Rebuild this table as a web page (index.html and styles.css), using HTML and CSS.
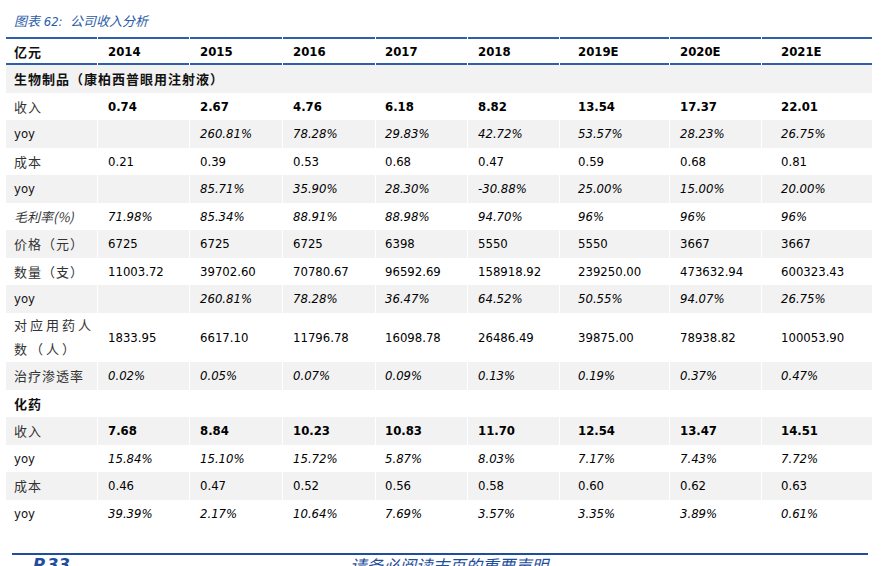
FILE: index.html
```html
<!DOCTYPE html>
<html lang="zh">
<head>
<meta charset="utf-8">
<title>公司收入分析</title>
<link rel="stylesheet" href="styles.css">
</head>
<body>
<div class="page">
  <div class="title">图表 62:&nbsp; 公司收入分析</div>
  <table class="data">
    <colgroup>
      <col class="c0"><col class="c1"><col class="c2"><col class="c3"><col class="c4"><col class="c5"><col class="c6"><col class="c7"><col class="c8">
    </colgroup>
    <thead>
      <tr><th class="lab">亿元</th><th>2014</th><th>2015</th><th>2016</th><th>2017</th><th>2018</th><th>2019E</th><th>2020E</th><th>2021E</th></tr>
    </thead>
    <tbody>
      <tr class="g"><td class="sec" colspan="9">生物制品（康柏西普眼用注射液）</td></tr>
      <tr><td class="lab">收入</td><td class="b">0.74</td><td class="b">2.67</td><td class="b">4.76</td><td class="b">6.18</td><td class="b">8.82</td><td class="b">13.54</td><td class="b">17.37</td><td class="b">22.01</td></tr>
      <tr class="g"><td class="en">yoy</td><td></td><td class="i">260.81%</td><td class="i">78.28%</td><td class="i">29.83%</td><td class="i">42.72%</td><td class="i">53.57%</td><td class="i">28.23%</td><td class="i">26.75%</td></tr>
      <tr><td class="lab">成本</td><td>0.21</td><td>0.39</td><td>0.53</td><td>0.68</td><td>0.47</td><td>0.59</td><td>0.68</td><td>0.81</td></tr>
      <tr class="g"><td class="en">yoy</td><td></td><td class="i">85.71%</td><td class="i">35.90%</td><td class="i">28.30%</td><td class="i">-30.88%</td><td class="i">25.00%</td><td class="i">15.00%</td><td class="i">20.00%</td></tr>
      <tr><td class="lab it">毛利率(%)</td><td class="i">71.98%</td><td class="i">85.34%</td><td class="i">88.91%</td><td class="i">88.98%</td><td class="i">94.70%</td><td class="i">96%</td><td class="i">96%</td><td class="i">96%</td></tr>
      <tr class="g"><td class="lab">价格（元）</td><td>6725</td><td>6725</td><td>6725</td><td>6398</td><td>5550</td><td>5550</td><td>3667</td><td>3667</td></tr>
      <tr><td class="lab">数量（支）</td><td>11003.72</td><td>39702.60</td><td>70780.67</td><td>96592.69</td><td>158918.92</td><td>239250.00</td><td>473632.94</td><td>600323.43</td></tr>
      <tr class="g"><td class="en">yoy</td><td></td><td class="i">260.81%</td><td class="i">78.28%</td><td class="i">36.47%</td><td class="i">64.52%</td><td class="i">50.55%</td><td class="i">94.07%</td><td class="i">26.75%</td></tr>
      <tr class="tall"><td class="lab two">对应用药人<br>数（人）</td><td>1833.95</td><td>6617.10</td><td>11796.78</td><td>16098.78</td><td>26486.49</td><td>39875.00</td><td>78938.82</td><td>100053.90</td></tr>
      <tr class="g"><td class="lab">治疗渗透率</td><td class="i">0.02%</td><td class="i">0.05%</td><td class="i">0.07%</td><td class="i">0.09%</td><td class="i">0.13%</td><td class="i">0.19%</td><td class="i">0.37%</td><td class="i">0.47%</td></tr>
      <tr><td class="sec" colspan="9">化药</td></tr>
      <tr class="g"><td class="lab">收入</td><td class="b">7.68</td><td class="b">8.84</td><td class="b">10.23</td><td class="b">10.83</td><td class="b">11.70</td><td class="b">12.54</td><td class="b">13.47</td><td class="b">14.51</td></tr>
      <tr><td class="en">yoy</td><td class="i">15.84%</td><td class="i">15.10%</td><td class="i">15.72%</td><td class="i">5.87%</td><td class="i">8.03%</td><td class="i">7.17%</td><td class="i">7.43%</td><td class="i">7.72%</td></tr>
      <tr class="g"><td class="lab">成本</td><td>0.46</td><td>0.47</td><td>0.52</td><td>0.56</td><td>0.58</td><td>0.60</td><td>0.62</td><td>0.63</td></tr>
      <tr><td class="en">yoy</td><td class="i">39.39%</td><td class="i">2.17%</td><td class="i">10.64%</td><td class="i">7.69%</td><td class="i">3.57%</td><td class="i">3.35%</td><td class="i">3.89%</td><td class="i">0.61%</td></tr>
    </tbody>
  </table>
  <div class="footer">
    <span class="pg">P.33</span>
    <span class="notice">请务必阅读末页的重要声明</span>
  </div>
</div>
</body>
</html>
```

FILE: styles.css
```css
html, body {
  margin: 0;
  padding: 0;
  background: #ffffff;
}

body {
  font-family: "DejaVu Sans Condensed", "DejaVu Sans", "Noto Sans CJK SC", sans-serif;
  font-size: 13px;
  color: #000000;
}

.page {
  padding: 12px 0 0 6px;
  width: 867px;
}

.title {
  height: 25px;
  line-height: 20px;
  padding-left: 8px;
  color: #2b5ca8;
  font-style: italic;
  font-size: 13px;
}

.data {
  border-collapse: separate;
  border-spacing: 1px 0;
  margin-left: -1px;
  width: 868px;
  table-layout: fixed;
}

.c0 { width: 91px; }
.c1 { width: 91px; }
.c2 { width: 92px; }
.c3 { width: 92px; }
.c4 { width: 91px; }
.c5 { width: 91px; }
.c6 { width: 109px; }
.c7 { width: 91px; }
.c8 { width: 110px; }

.data th,
.data td {
  text-align: left;
  padding: 0 0 0 10px;
  white-space: nowrap;
  vertical-align: middle;
}

.data th {
  height: 24px;
  border-top: 2px solid #2f5fa8;
  border-bottom: 2px solid #2f5fa8;
  font-weight: bold;
  font-size: 13px;
}

.data tbody tr {
  height: 27.5px;
}

.data tbody tr.tall {
  height: 49.5px;
}

.data tr.g td {
  background: #f2f2f2;
}

.data th:nth-child(1),
.data td:nth-child(1) { padding-left: 8px; }
.data th:nth-child(5),
.data td:nth-child(5) { padding-left: 9px; }
.data th:nth-child(7),
.data td:nth-child(7) { padding-left: 18px; }
.data th:nth-child(9),
.data td:nth-child(9) { padding-left: 19px; }

.data .lab {
  font-family: "Noto Sans CJK SC", sans-serif;
  color: #333333;
  letter-spacing: 1px;
}

.data th.lab {
  color: #111111;
}

.data .lab.it {
  font-style: italic;
  letter-spacing: 0;
}

.data .lab.two {
  letter-spacing: 3px;
  line-height: 24px;
  white-space: normal;
}

.data .sec {
  font-family: "Noto Sans CJK SC", sans-serif;
  font-weight: bold;
  color: #111111;
  letter-spacing: 1px;
  padding-left: 8px;
}

.data .en {
  color: #111111;
}

.b { font-weight: bold; }
.i { font-style: italic; }

.footer {
  margin: 26px 0 0 6px;
  width: 856px;
  border-top: 2px solid #1f4e9c;
  display: grid;
  grid-template-columns: 317px 1fr;
  padding-left: 21px;
  box-sizing: border-box;
  color: #1f4e9c;
  font-style: italic;
  font-size: 16.5px;
  line-height: 20px;
}

.pg {
  font-weight: bold;
  font-family: "DejaVu Sans", sans-serif;
}

.notice {
  font-family: "Noto Sans CJK SC", sans-serif;
}
```
